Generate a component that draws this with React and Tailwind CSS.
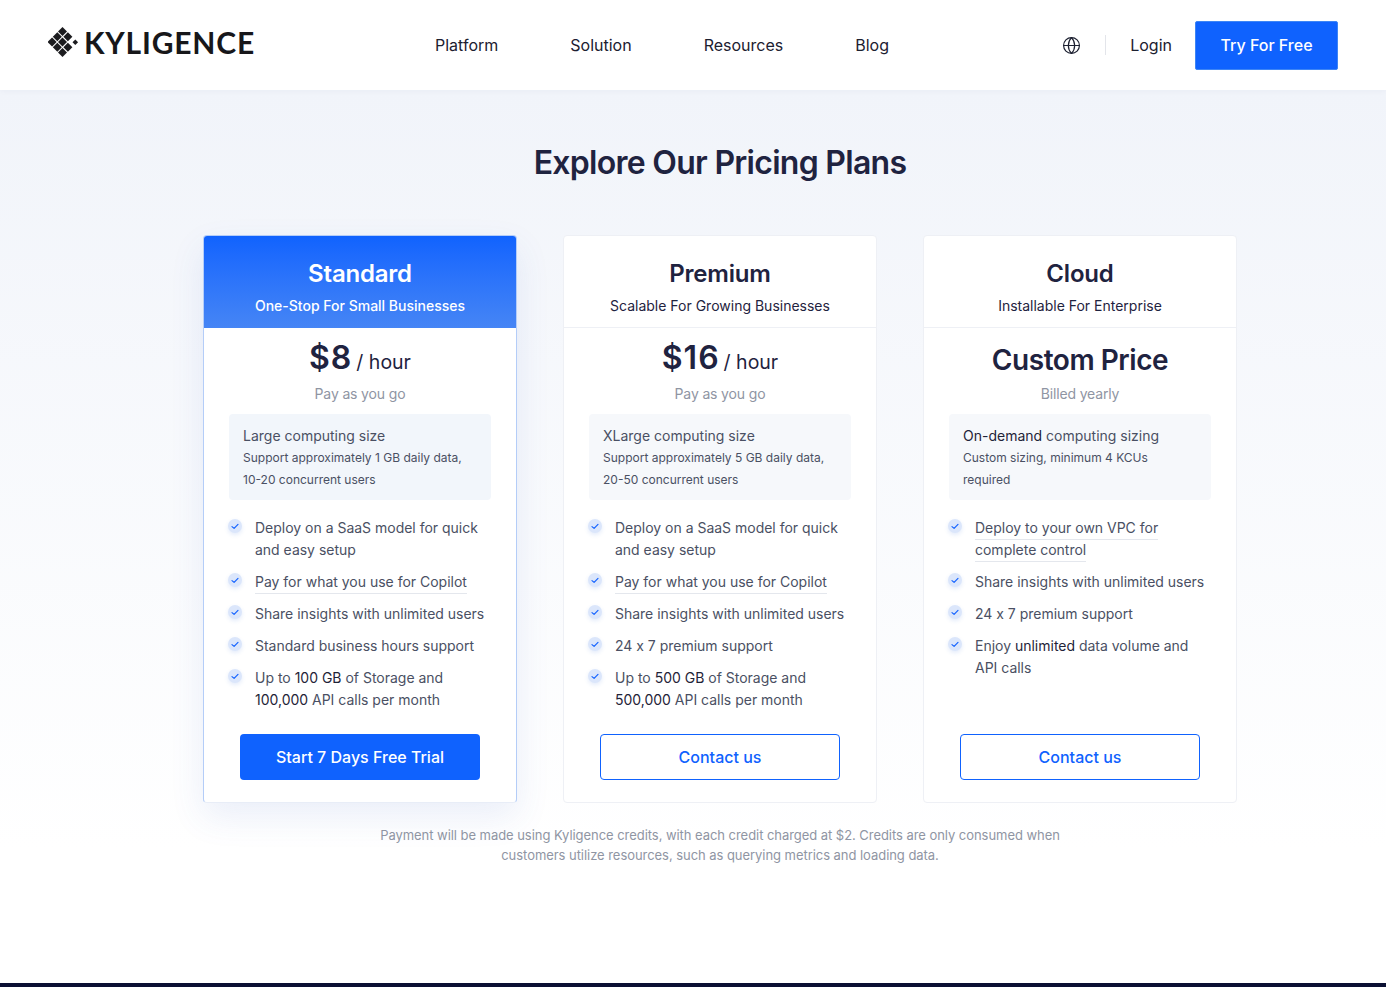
import { Globe } from "lucide-react"

// words wrapped in ** ** render a little darker, as in the original copy
const plans = [
  {
    name: "Standard",
    tagline: "One-Stop For Small Businesses",
    price: "$8",
    note: "Pay as you go",
    size: "Large computing size",
    detail: ["Support approximately 1 GB daily data,", "10-20 concurrent users"],
    features: [
      { text: "Deploy on a SaaS model for quick and easy setup" },
      { text: "Pay for what you use for Copilot", line: true },
      { text: "Share insights with unlimited users" },
      { text: "Standard business hours support" },
      { text: "Up to **100 GB** of Storage and **100,000** API calls per month" },
    ],
    cta: "Start 7 Days Free Trial",
    featured: true,
  },
  {
    name: "Premium",
    tagline: "Scalable For Growing Businesses",
    price: "$16",
    note: "Pay as you go",
    size: "XLarge computing size",
    detail: ["Support approximately 5 GB daily data,", "20-50 concurrent users"],
    features: [
      { text: "Deploy on a SaaS model for quick and easy setup" },
      { text: "Pay for what you use for Copilot", line: true },
      { text: "Share insights with unlimited users" },
      { text: "24 x 7 premium support" },
      { text: "Up to **500 GB** of Storage and **500,000** API calls per month" },
    ],
    cta: "Contact us",
  },
  {
    name: "Cloud",
    tagline: "Installable For Enterprise",
    custom: "Custom Price",
    note: "Billed yearly",
    size: "**On-demand** computing sizing",
    detail: ["Custom sizing, minimum 4 KCUs", "required"],
    features: [
      { text: "Deploy to your own VPC for complete control", line: true },
      { text: "Share insights with unlimited users" },
      { text: "24 x 7 premium support" },
      { text: "Enjoy **unlimited** data volume and", next: "API calls" },
    ],
    cta: "Contact us",
  },
]

function Rich({ text }) {
  return text.split("**").map((part, i) =>
    i % 2 ? (
      <span key={i} className="text-[#1f2438]">
        {part}
      </span>
    ) : (
      part
    ),
  )
}

function Logo() {
  const big = [
    [62, 32.5],
    [56.8, 37.8],
    [67.4, 37.8],
    [62, 43],
    [51.6, 43],
    [56.8, 48.2],
    [67.4, 48.2],
    [62, 53.4],
  ]
  return (
    <div className="flex items-center">
      <svg width="31" height="30" viewBox="47.5 28 31 30" className="shrink-0">
        {big.map(([x, y]) => (
          <path key={`${x}-${y}`} d={`M${x} ${y - 4.5}L${x + 4.5} ${y}L${x} ${y + 4.5}L${x - 4.5} ${y}Z`} fill="#1c1c1f" />
        ))}
        <path d="M74.8 40.4L77.6 43.2L74.8 46L72 43.2Z" fill="#1c1c1f" />
      </svg>
      <span className="ml-[5px] text-[30px] leading-none font-bold text-[#17171a] tracking-[0.8px] font-['Lato','Inter',sans-serif]">
        KYLIGENCE
      </span>
    </div>
  )
}

function Header() {
  return (
    <header className="relative z-10 h-[90px] bg-white flex items-center px-12 shadow-[0_1px_6px_rgba(30,50,100,0.04)]">
      <div className="w-[387px] -mt-[6px]">
        <Logo />
      </div>
      <nav className="flex gap-[72px] text-[16px] text-[#1c2030]">
        <a href="#">Platform</a>
        <a href="#">Solution</a>
        <a href="#">Resources</a>
        <a href="#">Blog</a>
      </nav>
      <div className="ml-auto flex items-center">
        <Globe size={19} strokeWidth={1.5} className="text-[#1c2030]" />
        <span className="ml-[24px] h-5 w-px bg-[#e3e5ea]" />
        <a href="#" className="ml-[24px] text-[16px] text-[#1c2030]">
          Login
        </a>
        <button className="ml-[23px] w-[143px] h-[49px] rounded-[2px] border border-[#3d85f5] bg-[#0f62fe] text-white text-[16px] font-medium">
          Try For Free
        </button>
      </div>
    </header>
  )
}

function Check() {
  return (
    <span className="-ml-px mt-[2px] w-[14px] h-[14px] shrink-0 rounded-full bg-[#dbe6fb] flex items-center justify-center shadow-[0_2px_4px_rgba(60,110,220,0.14)]">
      <svg width="8" height="7" viewBox="0 0 8 7" fill="none">
        <path d="M1 3.6L3.1 5.4L7 1.4" stroke="#1463ff" strokeWidth="1.2" strokeLinecap="round" strokeLinejoin="round" />
      </svg>
    </span>
  )
}

function PlanCard({ plan }) {
  const { featured } = plan
  return (
    <div
      className={`w-[314px] h-[568px] flex flex-col rounded-[4px] bg-white overflow-hidden border ${
        featured
          ? "border-[#b4cdf8] border-b-[#e8edf7] shadow-[0_14px_34px_rgba(60,100,200,0.1)]"
          : "border-[#eef0f5]"
      }`}
    >
      <div
        className={`shrink-0 flex flex-col items-center ${
          featured
            ? "bg-gradient-to-b from-[#0f62fe] to-[#4585f5] text-white -mx-px -mt-px h-[93px] pt-[23px]"
            : "h-[92px] pt-[22px] border-b border-[#eef0f5] text-[#1f2340]"
        }`}
      >
        <h3 className="text-[24px] leading-[32px] font-semibold tracking-[-0.2px]">{plan.name}</h3>
        <p className={`mt-[5px] text-[14px] leading-[22px] ${featured ? "font-medium" : ""}`}>{plan.tagline}</p>
      </div>

      <div className="flex-1 flex flex-col px-[25px]">
        <div className="h-[55px] pt-[8px] flex items-center justify-center">
          {plan.custom ? (
            <span className="text-[28px] leading-[40px] font-semibold tracking-[-0.45px] text-[#1f2340]">{plan.custom}</span>
          ) : (
            <span className="text-[#1f2340] leading-[40px] translate-y-[1px]">
              <span className="text-[32px] font-semibold tracking-[1px]">{plan.price}</span>
              <span className="text-[19.5px] ml-[4px]">/ hour</span>
            </span>
          )}
        </div>
        <p className="text-center text-[14px] leading-[22px] tracking-[-0.15px] text-[#8f95a3]">{plan.note}</p>

        <div
          className={`mt-[9px] h-[86px] rounded-[4px] px-[14px] pt-[11px] text-[#4a5063] ${
            featured ? "bg-[#f2f6fb]" : "bg-[#f6f8fb]"
          }`}
        >
          <p className="text-[14px] leading-[22px]">
            <Rich text={plan.size} />
          </p>
          {plan.detail.map((line) => (
            <p key={line} className="text-[12px] leading-[22px]">
              {line}
            </p>
          ))}
        </div>

        <ul className="mt-[17px] flex-1 flex flex-col gap-[10px]">
          {plan.features.map((f) => (
            <li key={f.text} className="flex gap-[13px]">
              <Check />
              <p className="text-[14px] leading-[22px] tracking-[-0.01px] text-[#4a5063]">
                <span className={f.line ? "pb-[3px] border-b border-[#e4e7ed]" : ""}>
                  <Rich text={f.text} />
                </span>
                {f.next && <span className="block">{f.next}</span>}
              </p>
            </li>
          ))}
        </ul>

        <button
          className={`mx-auto mb-[22px] w-[240px] h-[46px] rounded-[4px] text-[16px] font-medium ${
            featured ? "bg-[#0f62fe] text-white" : "bg-white border border-[#0f62fe] text-[#0f62fe]"
          }`}
        >
          {plan.cta}
        </button>
      </div>
    </div>
  )
}

export default function App() {
  return (
    <div className="w-[1386px] h-[987px] overflow-hidden flex flex-col bg-white font-['Inter',sans-serif]">
      <Header />
      <main className="flex-1 w-[1440px] flex flex-col items-center bg-gradient-to-b from-[#f1f4fa] to-white to-[85%]">
        <h1 className="mt-[52px] text-[32px] leading-[42px] font-semibold tracking-[-0.72px] text-[#1f2340]">
          Explore Our Pricing Plans
        </h1>
        <div className="mt-[51px] flex gap-[46px]">
          {plans.map((plan) => (
            <PlanCard key={plan.name} plan={plan} />
          ))}
        </div>
        <p className="mt-[22px] w-[700px] text-center text-[13px] leading-[20px] tracking-[-0.05px] text-[#8f95a3]">
          Payment will be made using Kyligence credits, with each credit charged at $2. Credits are only consumed when
          <br />
          customers utilize resources, such as querying metrics and loading data.
        </p>
      </main>
      <div className="h-[4px] shrink-0 bg-[#0b1033]" />
    </div>
  )
}
